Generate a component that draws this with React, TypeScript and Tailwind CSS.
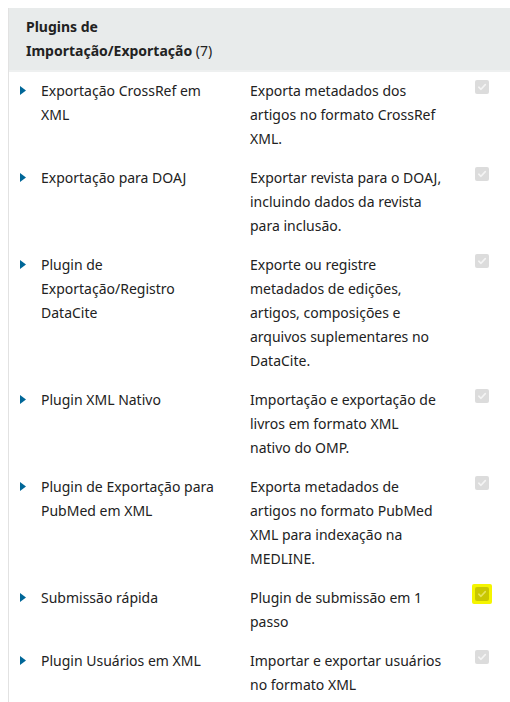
const plugins = [
  { name: ["Exportação CrossRef em", "XML"], description: ["Exporta metadados dos", "artigos no formato CrossRef", "XML."] },
  { name: ["Exportação para DOAJ"], description: ["Exportar revista para o DOAJ,", "incluindo dados da revista", "para inclusão."] },
  { name: ["Plugin de", "Exportação/Registro", "DataCite"], description: ["Exporte ou registre", "metadados de edições,", "artigos, composições e", "arquivos suplementares no", "DataCite."] },
  { name: ["Plugin XML Nativo"], description: ["Importação e exportação de", "livros em formato XML", "nativo do OMP."] },
  { name: ["Plugin de Exportação para", "PubMed em XML"], description: ["Exporta metadados de", "artigos no formato PubMed", "XML para indexação na", "MEDLINE."] },
  { name: ["Submissão rápida"], description: ["Plugin de submissão em 1", "passo"], highlight: true },
  { name: ["Plugin Usuários em XML"], description: ["Importar e exportar usuários", "no formato XML"] },
];

function Check({ highlight }: { highlight?: boolean }) {
  return (
    <span className={`flex items-center justify-center ${highlight ? "bg-[#f5f500] p-[3px] -m-[3px] rounded-[2px]" : ""}`}>
      <span className={`w-[14px] h-[14px] rounded-[2px] flex items-center justify-center ${highlight ? "bg-[#c9c700]" : "bg-[#dcdcdc]"}`}>
        <svg width="10" height="10" viewBox="0 0 10 10" fill="none">
          <path d="M1.8 5.2 L4 7.3 L8.3 2.6" stroke={highlight ? "#e6e45a" : "#f4f4f4"} strokeWidth="1.6" strokeLinecap="round" strokeLinejoin="round" />
        </svg>
      </span>
    </span>
  );
}

function Lines({ lines }: { lines: string[] }) {
  return (
    <>
      {lines.map((l, i) => (
        <span key={i} className="block whitespace-nowrap">{l}</span>
      ))}
    </>
  );
}

export default function App() {
  return (
    <div className="bg-white min-h-screen pt-2 pl-2 font-['Noto_Sans',sans-serif] text-[14px] leading-[24px] text-[#222]">
      <div className="border-l border-[#e2e2e2] min-h-[694px]">
        {/* Header */}
        <div className="bg-[#e8ebeb] pl-[17px] pt-[7px] pb-[7px] border-b-2 border-[#eef0f0]">
          <p className="max-w-[220px]">
            <span className="font-bold">Plugins de Importação/Exportação</span> (7)
          </p>
        </div>

        {/* Rows */}
        <div>
          {plugins.map((p) => (
            <div key={p.name.join(" ")} className="flex pt-[7px] pb-[8px]">
              <div className="w-[32px] flex justify-end pr-[15px] pt-[7px]">
                <svg width="6" height="9" viewBox="0 0 6 9">
                  <path d="M0 0 L6 4.5 L0 9 Z" fill="#006798" />
                </svg>
              </div>
              <div className="w-[191px] shrink-0">
                <Lines lines={p.name} />
              </div>
              <div className="w-[217px] shrink-0 pl-[18px]">
                <Lines lines={p.description} />
              </div>
              <div className="pl-[26px] pt-[1px]">
                <Check highlight={p.highlight} />
              </div>
            </div>
          ))}
        </div>
      </div>
    </div>
  );
}
